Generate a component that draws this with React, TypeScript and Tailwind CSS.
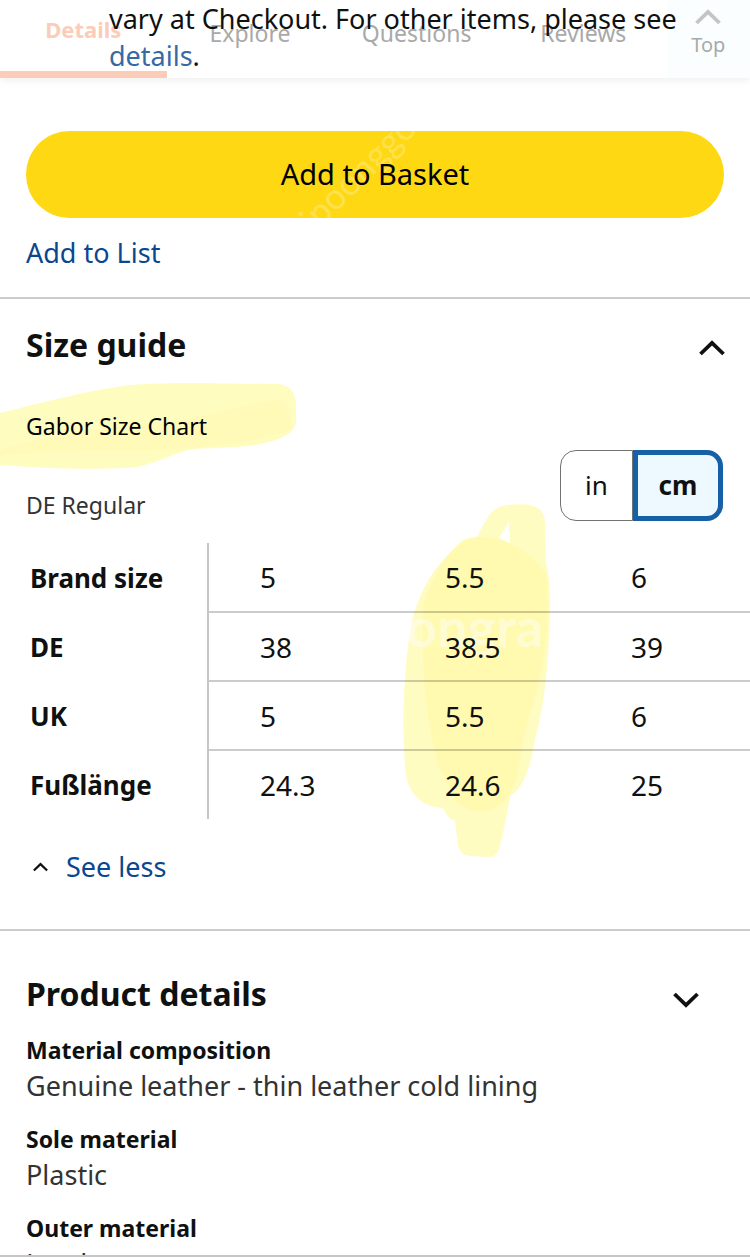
import { useState } from "react";

const TABS = ["Explore", "Questions", "Reviews"];

const SIZE_ROWS = [
  { label: "Brand size", values: ["5", "5.5", "6"] },
  { label: "DE", values: ["38", "38.5", "39"] },
  { label: "UK", values: ["5", "5.5", "6"] },
  { label: "Fußlänge", values: ["24.3", "24.6", "25"] },
];

const DETAILS = [
  { term: "Material composition", value: "Genuine leather - thin leather cold lining" },
  { term: "Sole material", value: "Plastic" },
  { term: "Outer material", value: "Leather" },
];

function Chevron({ down = false, className }: { down?: boolean; className: string }) {
  return (
    <svg viewBox="0 0 26 16" fill="none" stroke="currentColor" className={className} aria-hidden="true">
      <path d={down ? "M1.5 2 13 13 24.5 2" : "M1.5 14 13 3 24.5 14"} strokeWidth="3.8" />
    </svg>
  );
}

function SectionTabs() {
  return (
    <nav className="absolute inset-x-0 top-0 flex h-[78px] bg-white text-[23px] leading-[32px] text-[#a9a9a9] shadow-[0_2px_8px_rgba(0,0,0,0.07)]">
      <a href="#details" className="flex w-2/9 justify-center border-b-[7px] border-[#fbcdb9] pt-[13px] text-[22px] font-bold text-[#fbcdb9]">
        Details
      </a>
      {TABS.map((tab) => (
        <a key={tab} href={`#${tab.toLowerCase()}`} className="flex w-2/9 justify-center pt-[17px]">
          {tab}
        </a>
      ))}
      <a href="#top" className="flex flex-1 flex-col items-center bg-[#fbfefe] pt-[9px] text-[20px] leading-[28px]">
        <Chevron className="mb-[6px] h-4 w-[26px] text-[#c4c4c4]" />
        Top
      </a>
    </nav>
  );
}

function UnitToggle() {
  const [unit, setUnit] = useState("cm");
  const on = "border-[5px] border-[#1660a8] bg-[#edf8ff] font-bold";
  const off = "border border-[#6f7373] bg-white";
  return (
    <div className="flex h-[71px] w-[163px] text-[26px]" role="group" aria-label="Unit">
      <button onClick={() => setUnit("in")} className={`w-[73px] rounded-l-[16px] ${unit === "in" ? on : off}`}>
        in
      </button>
      <button onClick={() => setUnit("cm")} className={`flex-1 rounded-r-[16px] ${unit === "cm" ? on : off}`}>
        cm
      </button>
    </div>
  );
}

function TitleHighlight() {
  return (
    <svg viewBox="0 0 300 90" className="absolute -top-[7px] left-0 h-[90px] w-[300px]" aria-hidden="true">
      <path d="M0 33C45 22 85 11 130 5C175 2 230 4 278 4Q297 6 296 28V40C297 53 280 61 255 65C230 69 207 67 188 70C165 77 145 88 127 88C85 90 40 88 0 85Z" fill="#fffcc0" />
      <path d="M0 70C65 51 125 47 180 40C225 33 248 22 278 20Q293 30 291 48C272 61 230 62 190 69C125 74 65 67 0 76Z" fill="#fff9ad" opacity=".45" />
    </svg>
  );
}

function ColumnHighlight() {
  return (
    <svg viewBox="0 0 150 360" className="absolute -top-[41px] left-[402px] h-[360px] w-[150px]" aria-hidden="true">
      <path
        fillRule="evenodd"
        d="M74 37C84 17 89 5 105 3C122 1 135 3 139 9Q144 14 143 26L144 61C149 80 149 111 147 137C145 175 141 210 133 237C129 267 119 289 109 293C105 306 103 327 97 347Q94 355 88 355L68 354Q58 353 56 344L53 319Q45 316 41 306C20 305 4 292 3 264C0 220 1 168 10 119C20 81 38 55 65 38ZM107 20L97 36L108 41Z"
        fill="#fffcc2"
      />
      <path d="M61 38C90 26 132 49 144 73C149 118 142 178 127 213C117 246 120 276 106 294C98 308 80 314 64 306C50 300 52 291 38 267C22 223 18 140 22 100C32 70 46 50 61 38Z" fill="#fff9a8" opacity=".75" />
    </svg>
  );
}

function SizeTable() {
  return (
    <div className="relative mt-[22px]">
      <ColumnHighlight />
      <span className="absolute left-[406px] top-[54px] font-[Lato] text-[54px] leading-[60px] font-bold text-white/45" aria-hidden="true">
        ongra
      </span>
      <table className="relative w-full table-fixed border-collapse text-left text-[28px] leading-[36px]">
        <colgroup>
          <col className="w-[208px]" />
          <col className="w-[186px]" />
          <col className="w-[186px]" />
          <col />
        </colgroup>
        <tbody>
          {SIZE_ROWS.map((row) => (
            <tr key={row.label} className="group h-[69px]">
              <th scope="row" className="border-r-2 border-[#c6c6c6] p-0 pl-[30px] text-[26px] font-bold">
                {row.label}
              </th>
              {row.values.map((value, i) => (
                <td key={i} className="border-b-2 border-black/20 p-0 pl-[51px] group-last:border-b-0">
                  {value}
                </td>
              ))}
            </tr>
          ))}
        </tbody>
      </table>
    </div>
  );
}

export default function App() {
  return (
    <div className="flex h-screen flex-col bg-white font-['Noto_Sans',sans-serif] text-[#0f1111]">
      <main className="min-h-0 flex-1 overflow-hidden border-b-2 border-[#c6c6c6]">
        <header className="relative h-[78px]">
          <SectionTabs />
          <p className="relative pl-[109px] text-[27px] leading-[37px] whitespace-nowrap">
            vary at Checkout. For other items, please see
            <br />
            <a href="#delivery" className="text-[#3769a5]">details</a>.
          </p>
        </header>

        <section className="border-b-2 border-[#cccccc] px-[26px] pt-[53px] pb-[26px]">
          <button className="relative h-[87px] w-full overflow-hidden rounded-full bg-[#ffd814] pb-[2px] text-[29px] text-black">
            <span className="absolute left-[250px] top-[20px] -rotate-45 font-[Lato] text-[36px] leading-[48px] text-white/25" aria-hidden="true">
              lipoonggo
            </span>
            <span className="relative">Add to Basket</span>
          </button>
          <a href="#list" className="mt-[17px] block w-fit text-[27px] leading-[36px] text-[#0b478f]">Add to List</a>
        </section>

        <section className="border-b-2 border-[#cccccc] pb-[44px]">
          <div className="flex items-end justify-between pt-[24px] pr-[25px] pl-[26px]">
            <h2 className="text-[32px] leading-[44px] font-bold">Size guide</h2>
            <button aria-label="Collapse size guide" className="pb-[11px]">
              <Chevron className="h-4 w-[26px]" />
            </button>
          </div>
          <div className="relative mt-[20px]">
            <TitleHighlight />
            <h3 className="relative pt-[23px] pl-[26px] text-[23px] leading-[32px] text-black">Gabor Size Chart</h3>
          </div>
          <div className="mt-[8px] flex items-end justify-between pr-[27px] pl-[26px]">
            <p className="text-[23px] leading-[32px] text-[#333333]">DE Regular</p>
            <UnitToggle />
          </div>
          <SizeTable />
          <button className="mt-[30px] ml-[33px] flex items-center gap-[18px] text-[27px] leading-[36px] text-[#0b478f]">
            <Chevron className="h-[10px] w-[15px] text-[#0f1111]" />
            See less
          </button>
        </section>

        <section>
          <div className="flex items-end justify-between pt-[41px] pr-[51px] pl-[26px]">
            <h2 className="text-[32px] leading-[44px] font-bold">Product details</h2>
            <button aria-label="Expand product details" className="pb-[8px]">
              <Chevron down className="h-4 w-[26px]" />
            </button>
          </div>
          <dl className="mt-[16px] flex flex-col gap-[17px] px-[26px] leading-[36px]">
            {DETAILS.map(({ term, value }) => (
              <div key={term}>
                <dt className="text-[23px] font-bold">{term}</dt>
                <dd className="text-[27px] text-[#333333]">{value}</dd>
              </div>
            ))}
          </dl>
        </section>
      </main>
    </div>
  );
}
